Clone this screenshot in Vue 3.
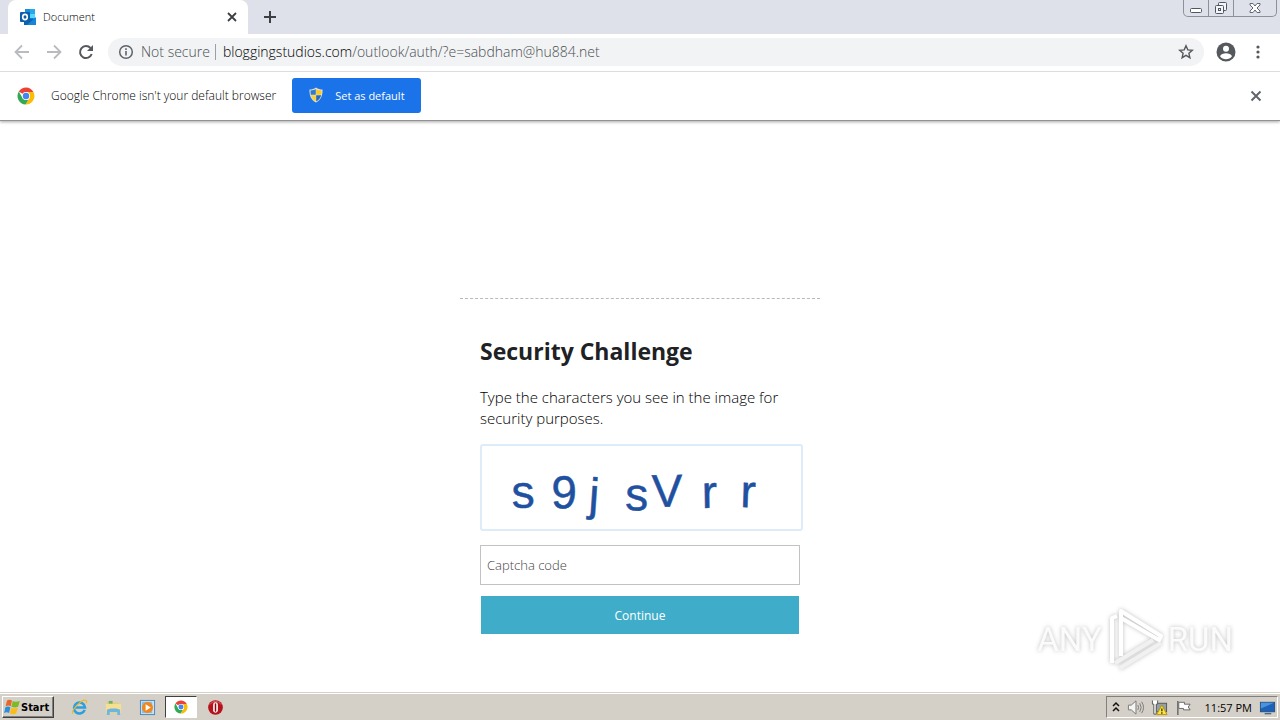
<template>
  <div class="screen">
    <header class="browser">
      <div class="tab-strip">
        <div class="tab">
          <svg class="tab-icon" viewBox="0 0 16 16" aria-hidden="true">
            <rect x="5" y="0" width="10" height="14" fill="#1490df" />
            <rect x="10" y="0" width="5" height="5" fill="#28a8ea" />
            <rect x="10" y="5" width="5" height="4" fill="#50d9ff" />
            <path d="M4 9l11 1v6H4z" fill="#0a64b0" />
            <path d="M16 8v8H7z" fill="#1784d9" />
            <rect y="3" width="10" height="10" rx="1" fill="#0f5da8" />
            <ellipse cx="5" cy="8" rx="2.3" ry="2.6" fill="none" stroke="#fff" stroke-width="1.6" />
          </svg>
          <span class="tab-title">Document</span>
          <button class="icon-button tab-close" aria-label="Close tab">
            <svg viewBox="0 0 16 16"><path d="M4 4l8 8M12 4l-8 8" stroke="#3c4043" stroke-width="1.8" /></svg>
          </button>
        </div>
        <button class="icon-button new-tab" aria-label="New tab">
          <svg viewBox="0 0 16 16"><path d="M8 2v12M2 8h12" stroke="#3c4043" stroke-width="2" /></svg>
        </button>
        <div class="window-controls">
          <button aria-label="Minimize">
            <svg viewBox="0 0 16 16"><rect x="2.5" y="8.500" width="11" height="4" rx="1" fill="#fff" stroke="#505762" /></svg>
          </button>
          <button aria-label="Restore">
            <svg viewBox="0 0 16 16" fill="#f4f5f8" stroke="#505762">
              <rect x="5.500" y="2.500" width="8" height="8" rx="1" />
              <rect x="2.500" y="5.500" width="8" height="8" rx="1" />
              <rect x="5.500" y="8.500" width="2" height="2" />
            </svg>
          </button>
          <button class="wide" aria-label="Close">
            <svg viewBox="0 0 16 16"><path d="M3 3.500h3l2 2.500 2-2.500h3v1.500L10 8l3 3v1.500h-3L8 10l-2 2.500H3V11l3-3-3-3z" fill="#fff" stroke="#606772" /></svg>
          </button>
        </div>
      </div>

      <div class="toolbar">
        <button class="icon-button" aria-label="Back">
          <svg viewBox="0 0 16 16"><path d="M15 8H2M8 1.500L1.500 8 8 14.500" fill="none" stroke="#b9bbbe" stroke-width="1.8" /></svg>
        </button>
        <button class="icon-button" aria-label="Forward">
          <svg viewBox="0 0 16 16"><path d="M1 8h13M8 1.500L14.500 8 8 14.500" fill="none" stroke="#b9bbbe" stroke-width="1.8" /></svg>
        </button>
        <button class="icon-button" aria-label="Reload">
          <svg viewBox="0 0 16 16">
            <path d="M13.700 10A6 6 0 1 1 12.500 4" fill="none" stroke="#55585c" stroke-width="2" />
            <path d="M15 1v6H9z" fill="#55585c" />
          </svg>
        </button>
        <div class="address-bar">
          <svg class="info-icon" viewBox="0 0 16 16" aria-hidden="true">
            <circle cx="8" cy="8" r="6.300" fill="none" stroke="#5f6368" stroke-width="1.500" />
            <path d="M8 7v4.500M8 4.300V6" stroke="#5f6368" stroke-width="1.600" />
          </svg>
          <span class="not-secure">Not secure</span>
          <span class="divider"></span>
          <span class="url"><span class="host">bloggingstudios.com</span>/outlook/auth/?e=sabdham@hu884.net</span>
          <button class="icon-button star" aria-label="Bookmark this page">
            <svg viewBox="0 0 16 16"><path d="M8 1.800l1.800 4.100 4.500.4-3.400 3 1 4.400L8 11.400l-3.900 2.300 1-4.400-3.400-3 4.500-.4z" fill="none" stroke="#55585c" stroke-width="1.400" /></svg>
          </button>
        </div>
        <button class="icon-button profile" aria-label="Profile">
          <svg viewBox="0 0 20 20">
            <circle cx="10" cy="10" r="9.500" fill="#55585c" />
            <circle cx="10" cy="6.700" r="3" fill="#fff" />
            <path d="M4 14.200c1-2.200 3.500-3 6-3s5 .8 6 3a7.300 7.300 0 0 1-12 0z" fill="#fff" />
          </svg>
        </button>
        <button class="icon-button" aria-label="Menu">
          <svg viewBox="0 0 16 16" fill="#55585c">
            <circle cx="8" cy="3" r="1.600" /><circle cx="8" cy="8" r="1.600" /><circle cx="8" cy="13" r="1.600" />
          </svg>
        </button>
      </div>

      <div class="info-bar">
        <svg class="chrome-logo" viewBox="0 0 18 18" aria-hidden="true">
          <path v-for="part in chromeParts" :key="part.fill" :d="part.d" :fill="part.fill" />
          <circle cx="9" cy="9" r="4" fill="#fff" />
          <circle cx="9" cy="9" r="3.200" fill="#4285f4" />
        </svg>
        <span class="info-text">Google Chrome isn't your default browser</span>
        <button class="default-button">
          <svg viewBox="0 0 16 16" aria-hidden="true">
            <path d="M8 0.500c2 1.500 4 2 6.500 2 .3 6-1.500 10.500-6.500 13C3 13 1.200 8.500 1.500 2.500 4 2.500 6 2 8 .5z" fill="#e7e3cf" />
            <path d="M7.800 2v5.800H2.700c-.2-1.400-.2-2.700-.2-4.300C4.500 3.400 6.300 3 7.800 2z" fill="#2f7bd0" />
            <path d="M8.200 2c1.500 1 3.300 1.400 5.300 1.500 0 1.600 0 2.900-.2 4.300H8.200z" fill="#fbc926" />
            <path d="M2.800 8.200h5v6.200c-2.800-1.600-4.400-3.600-5-6.200z" fill="#fbd03a" />
            <path d="M8.200 8.200h5c-.6 2.600-2.200 4.600-5 6.200z" fill="#2868bd" />
          </svg>
          Set as default
        </button>
        <button class="icon-button info-close" aria-label="Dismiss">
          <svg viewBox="0 0 16 16"><path d="M3.500 3.500l9 9M12.500 3.500l-9 9" stroke="#606368" stroke-width="1.900" /></svg>
        </button>
      </div>
    </header>

    <main class="page">
      <form class="challenge" @submit.prevent>
        <h1>Security Challenge</h1>
        <p>Type the characters you see in the image for security purposes.</p>
        <svg class="captcha" viewBox="0 0 319 83" role="img" aria-label="Captcha image">
          <text
            v-for="(c, i) in captcha"
            :key="i"
            :x="c.x"
            :y="c.y"
            :transform="`rotate(${c.angle} ${c.x} ${c.y})`"
          >{{ c.char }}</text>
        </svg>
        <input v-model="code" type="text" placeholder="Captcha code" aria-label="Captcha code" />
        <button type="submit">Continue</button>
      </form>

      <div class="watermark">
        <span>ANY</span>
        <svg viewBox="0 0 60 66" aria-hidden="true">
          <path class="shade" d="M15 62l41-25M10 57l38-23" />
          <path d="M7 57V12l5-2" />
          <path d="M16 50V5l40 25-2 4-38-22" />
        </svg>
        <span>RUN</span>
      </div>
    </main>

    <footer class="taskbar">
      <button class="start">
        <svg viewBox="0 0 16 16" aria-hidden="true">
          <path d="M3 1.500c2-1 3.500-.8 5 .1L6.700 7.300c-1.500-.9-3-1-5-.1z" fill="#e8652b" />
          <path d="M8.800 2c1.700 1 4 1 7 .1l-1.700 5.700c-2.300.9-4.500.8-6.800-.1z" fill="#7db928" />
          <path d="M1.400 8.200c2-.9 3.500-.8 5 .1L5.100 14c-1.500-.9-3-1-5-.1z" fill="#2c8edb" />
          <path d="M7.300 8.700c1.700 1 4 1 6.500.1l-1.700 5.700c-2 .9-4.200.8-6.200-.1z" fill="#fbbc18" />
        </svg>
        Start
      </button>
      <nav class="quick-launch" aria-label="Quick launch">
        <button aria-label="Internet Explorer">
          <svg viewBox="0 0 18 18">
            <path d="M14.500 11.500A5.800 5.800 0 1 1 14.800 9H5" fill="none" stroke="#2ba0de" stroke-width="2.700" />
            <path d="M2 15.500C-.5 12.500 12-1 16 1.500c1 .7.500 2.200 0 3" fill="none" stroke="#edb82c" stroke-width="1.300" />
          </svg>
        </button>
        <button aria-label="Explorer">
          <svg viewBox="0 0 18 18">
            <path d="M2 3h5l1 1h7v11H2z" fill="#eac65d" />
            <path d="M4 2h4v4H4z" fill="#6cb26b" />
            <path d="M1 5h16v10H1z" fill="#f5df93" />
            <path d="M2 17v-5c0-2.500 14-2.500 14 0v5h-3v-3H5v3z" fill="#6db6df" />
          </svg>
        </button>
        <button aria-label="Media Player">
          <svg viewBox="0 0 18 18">
            <rect x="1.500" y="1.500" width="15" height="15" fill="#cfe2f1" stroke="#4588bd" />
            <rect x="3" y="3" width="11" height="12" fill="#8dbbe0" />
            <circle cx="9" cy="9" r="5.800" fill="#f48518" />
            <path d="M7 5.500l5.500 3.500L7 12.500z" fill="#fff" />
          </svg>
        </button>
        <button class="active" aria-label="Google Chrome">
          <svg viewBox="0 0 18 18">
            <path v-for="part in chromeParts" :key="part.fill" :d="part.d" :fill="part.fill" />
            <circle cx="9" cy="9" r="4" fill="#fff" />
            <circle cx="9" cy="9" r="3.200" fill="#4285f4" />
          </svg>
        </button>
        <button aria-label="Opera">
          <svg viewBox="0 0 18 18">
            <circle cx="9" cy="9" r="7.800" fill="#b5121b" />
            <path d="M3 6a7 7 0 0 1 12 0" fill="none" stroke="#dd646a" />
            <rect x="6.500" y="3.500" width="5" height="11" rx="2.500" fill="#fff" />
            <rect x="8.200" y="4.500" width="1.600" height="9" rx=".8" fill="#8d0810" />
          </svg>
        </button>
      </nav>
      <div class="tray">
        <svg class="chevrons" viewBox="0 0 8 16" aria-hidden="true">
          <path d="M1 7l3-3 3 3M1 12l3-3 3 3" fill="none" stroke="#111" stroke-width="1.500" />
        </svg>
        <svg viewBox="0 0 18 18" aria-hidden="true">
          <path d="M1.500 6.500h3l5-4.500v14l-5-4.500h-3z" fill="#f5f5f3" stroke="#777" />
          <path d="M11.500 6.500q1.500 2.500 0 5M13.500 4.500q3 4.500 0 9M15.500 3q4 6 0 12" fill="none" stroke="#777" />
        </svg>
        <svg viewBox="0 0 18 18" aria-hidden="true">
          <rect x="5.500" y="4.500" width="11" height="9" fill="#93a0a6" stroke="#555" />
          <path d="M1.500 1.500v4h1.500V16h2.500V5.500H7v-4" fill="#fff" stroke="#555" />
          <path d="M11.500 6.500l5.500 10H6z" fill="#ffe23d" stroke="#b69500" />
          <path d="M11.500 10v3M11.500 14v1.500" stroke="#222" stroke-width="1.300" />
        </svg>
        <svg viewBox="0 0 18 18" aria-hidden="true">
          <path d="M3 2v15" stroke="#666" stroke-width="1.500" />
          <path d="M4 3.500h6v2h6l-2 3 2 3H9v-1.500H4z" fill="#fff" stroke="#666" />
        </svg>
        <time>11:57 PM</time>
        <svg viewBox="0 0 18 18" aria-hidden="true">
          <rect x="1.500" y="3.500" width="15" height="10" fill="#1c62bb" stroke="#265079" />
          <path d="M2 4h14L2 10z" fill="#4d92db" />
          <path d="M6 15.500h7" stroke="#48698a" stroke-width="1.500" />
        </svg>
      </div>
    </footer>
  </div>
</template>

<script setup>
import { ref } from 'vue';

const code = ref('');

const chromeParts = [
  { fill: '#ea4335', d: 'M9 9L1.800 4.500A8.500 8.500 0 0 1 16.400 5H9z' },
  { fill: '#fbbc05', d: 'M9 5h7.400A8.500 8.500 0 0 1 8.500 17.500L12.500 11z' },
  { fill: '#34a853', d: 'M1.800 4.500L5.500 11 9 13l2.500-.5-3 5A8.500 8.500 0 0 1 1.800 4.500z' }
];

const captcha = [
  { char: 's', x: 30, y: 62, angle: -2 },
  { char: '9', x: 69, y: 62, angle: 1 },
  { char: 'j', x: 106, y: 64, angle: 4 },
  { char: 's', x: 143, y: 64, angle: 1 },
  { char: 'V', x: 170, y: 61, angle: -1 },
  { char: 'r', x: 220, y: 62, angle: -1 },
  { char: 'r', x: 258, y: 61, angle: 2 }
];
</script>

<style>
body {
  margin: 0;
  background: #fff;
}
</style>

<style scoped>
.screen {
  display: flex;
  flex-direction: column;
  min-height: 100vh;
  font-family: "Open Sans", "Noto Sans", sans-serif;
  font-size: 12px;
  color: #202124;
}

.screen * {
  box-sizing: border-box;
}

button {
  font-family: inherit;
  margin: 0;
  padding: 0;
  border: none;
  background: none;
}

svg {
  display: block;
  flex: none;
}

.icon-button svg {
  width: 16px;
  height: 16px;
}

/* Browser frame */
.browser {
  position: relative;
  box-shadow: 0 1px 3px rgba(0, 0, 0, 0.35);
  border-bottom: 1px solid #929292;
}

.tab-strip {
  display: flex;
  align-items: flex-start;
  height: 34px;
  padding-left: 8px;
  background: #dee1e9;
}

.tab {
  display: flex;
  align-items: center;
  width: 240px;
  height: 34px;
  padding: 0 8px 0 12px;
  border-radius: 8px 8px 0 0;
  background: #fff;
}

.tab-icon {
  width: 16px;
  height: 16px;
}

.tab-title {
  flex: 1;
  padding: 0 0 2px 7px;
  font-size: 11px;
  font-weight: 300;
  color: #000;
}

.new-tab {
  padding: 9px 14px;
}

.window-controls {
  display: flex;
  margin-left: auto;
  margin-right: 3px;
  border: 1px solid #8c9099;
  border-top: none;
  border-radius: 0 0 5px 5px;
}

.window-controls button {
  display: flex;
  justify-content: center;
  width: 25px;
  height: 16px;
  border-right: 1px solid #8c9099;
}

.window-controls .wide {
  width: 42px;
  border-right: none;
}

.window-controls svg {
  width: 16px;
  height: 16px;
}

.toolbar {
  display: flex;
  align-items: center;
  gap: 16px;
  height: 38px;
  padding: 0 14px 2px;
  border-bottom: 1px solid #dcdddf;
  background: #fff;
}

.address-bar {
  display: flex;
  flex: 1;
  align-items: center;
  height: 28px;
  margin-left: -2px;
  padding: 0 10px;
  border-radius: 14px;
  background: #f1f3f4;
  font-size: 14px;
  font-weight: 300;
  color: #4b4f53;
}

.info-icon {
  width: 16px;
  height: 16px;
}

.not-secure {
  padding-left: 7px;
}

.divider {
  width: 1px;
  height: 16px;
  margin: 0 7px 0 5px;
  background: #9aa0a6;
}

.host {
  color: #000;
}

.star {
  margin-left: auto;
}

.profile {
  margin: 0 -2px 0 -4px;
}

.profile svg {
  width: 20px;
  height: 20px;
}

.info-bar {
  display: flex;
  align-items: center;
  height: 48px;
  padding: 0 16px 0 17px;
  background: #fff;
}

.chrome-logo {
  width: 18px;
  height: 18px;
}

.info-text {
  padding: 0 16px 2px 16px;
  font-weight: 300;
  color: #000;
}

.default-button {
  display: flex;
  align-items: center;
  gap: 11px;
  height: 35px;
  margin-bottom: 2px;
  padding: 0 16px;
  border-radius: 3px;
  background: #1a73e8;
  font-size: 11px;
  color: #fff;
}

.default-button svg {
  width: 16px;
  height: 16px;
}

.info-close {
  margin-left: auto;
}

/* Web page */
.page {
  position: relative;
  flex: 1;
}

.challenge {
  display: flex;
  flex-direction: column;
  width: 360px;
  margin: 177px auto 0;
  padding: 35px 20px 20px;
  border-top: 1px dashed #b9b9b9;
}

.challenge h1 {
  margin: 0 0 19px;
  font-size: 23px;
  font-weight: 700;
  line-height: 34px;
}

.challenge p {
  margin: 0 0 15px;
  font-size: 15px;
  font-weight: 300;
  line-height: 21px;
  color: #000;
}

.captcha {
  width: calc(100% + 3px);
  margin-bottom: 14px;
  border: 2px solid #deebf9;
  border-radius: 3px;
}

.captcha text {
  font-family: "Liberation Sans", Arial, sans-serif;
  font-size: 46px;
  fill: #1f51a0;
  stroke: #1f51a0;
  stroke-width: 0.5;
}

.challenge input {
  height: 40px;
  padding: 0 6px;
  border: 1px solid #c2c2c2;
  background: #fff;
  font-family: inherit;
  font-size: 13px;
  font-weight: 300;
}

.challenge input::placeholder {
  color: #444;
}

.challenge button {
  height: 38px;
  margin: 11px 1px 0;
  background: #3fadc9;
  font-size: 12px;
  color: #fff;
}

.watermark {
  position: absolute;
  right: 47px;
  bottom: 20px;
  display: flex;
  align-items: center;
  gap: 3px;
  font-family: Roboto, sans-serif;
  font-size: 33px;
  color: #fbfbfb;
  filter: drop-shadow(0 0 2px rgba(0, 0, 0, 0.25));
}

.watermark svg {
  width: 60px;
  height: 66px;
  fill: none;
  stroke: #fff;
  stroke-width: 4;
  stroke-linejoin: round;
}

.watermark .shade {
  stroke: #f1f1f1;
}

/* Taskbar */
.taskbar {
  display: flex;
  align-items: center;
  height: 28px;
  padding: 1px 2px 0;
  border-top: 1px solid #d4d0c8;
  box-shadow: inset 0 1px #fff;
  background: #d4d0c8;
}

.start {
  display: flex;
  align-items: center;
  gap: 1px;
  height: 22px;
  padding: 0 4px 0 1px;
  border: 1px solid;
  border-color: #fff #404040 #404040 #fff;
  box-shadow: inset -1px -1px #808080;
  font-family: "DejaVu Sans Condensed", "Open Sans", sans-serif;
  font-size: 11px;
  font-weight: 700;
}

.start svg {
  width: 16px;
  height: 16px;
}

.quick-launch {
  display: flex;
  gap: 2px;
  margin-left: 9px;
}

.quick-launch button {
  display: flex;
  align-items: center;
  justify-content: center;
  width: 32px;
  height: 22px;
}

.quick-launch .active {
  border: 1px solid;
  border-color: #404040 #fff #fff #404040;
  background: #fff;
}

.quick-launch svg {
  width: 17px;
  height: 17px;
}

.quick-launch .active svg {
  width: 14px;
  height: 14px;
}

.tray {
  display: flex;
  align-items: center;
  gap: 7px;
  height: 22px;
  margin-left: auto;
  padding: 0 1px 0 5px;
  border: 1px solid;
  border-color: #808080 #fff #fff #808080;
  font-size: 11px;
  color: #000;
}

.tray svg {
  width: 17px;
  height: 17px;
}

.tray .chevrons {
  width: 8px;
  height: 16px;
}

.tray time {
  padding-left: 6px;
}
</style>
